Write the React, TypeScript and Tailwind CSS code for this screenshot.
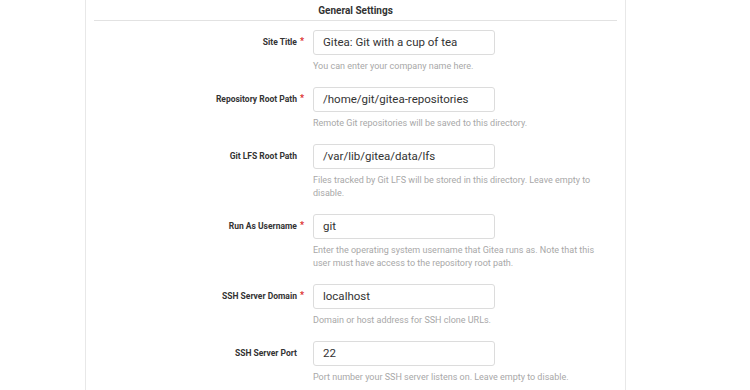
import React from "react";

type Field = { label: string; required?: boolean; value: string; help: string[] };

const fields: Field[] = [
  { label: "Site Title", required: true, value: "Gitea: Git with a cup of tea", help: ["You can enter your company name here."] },
  { label: "Repository Root Path", required: true, value: "/home/git/gitea-repositories", help: ["Remote Git repositories will be saved to this directory."] },
  { label: "Git LFS Root Path", value: "/var/lib/gitea/data/lfs", help: ["Files tracked by Git LFS will be stored in this directory. Leave empty to", "disable."] },
  { label: "Run As Username", required: true, value: "git", help: ["Enter the operating system username that Gitea runs as. Note that this", "user must have access to the repository root path."] },
  { label: "SSH Server Domain", required: true, value: "localhost", help: ["Domain or host address for SSH clone URLs."] },
  { label: "SSH Server Port", value: "22", help: ["Port number your SSH server listens on. Leave empty to disable."] },
];

export default function App() {
  return (
    <div className="w-[750px] h-[390px] overflow-hidden bg-white" style={{ fontFamily: "Roboto, 'Liberation Sans', sans-serif" }}>
      <div className="ml-[85px] w-[541px] h-[390px] border-x border-[#e8e8e8] px-[8px]">
        <div className="h-[21px] border-b border-[#e2e2e2] flex items-center justify-center text-[10px] font-bold text-[#333]">
          General Settings
        </div>
        <div className="flex flex-col pt-[9px]">
          {fields.map((f) => (
            <div key={f.label} className="flex h-auto pb-[14px]">
              <div className="w-[219px] shrink-0 h-[25px] flex items-center justify-end pr-[9px] text-[8.5px] font-bold text-[#333] whitespace-nowrap">
                <span>{f.label}</span>
                {f.required ? <span className="text-[#db2828] text-[9px] ml-[3px] self-start mt-[5px]">*</span> : <span className="w-[7px]" />}
              </div>
              <div className="flex flex-col">
                <div className="w-[182px] h-[25px] shrink-0 border border-[#dcdcdc] rounded-[3px] flex items-center pl-[9px] text-[11.5px] text-[#333] whitespace-nowrap">
                  {f.value}
                </div>
                <div className="mt-[5px] flex flex-col text-[9px] text-[#a8a8a8] whitespace-nowrap">
                  {f.help.map((h, i) => (
                    <div key={i} className="h-[13px] leading-[13px]">{h}</div>
                  ))}
                </div>
              </div>
            </div>
          ))}
        </div>
      </div>
    </div>
  );
}
